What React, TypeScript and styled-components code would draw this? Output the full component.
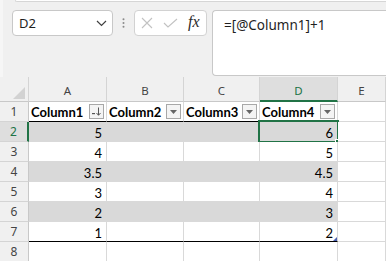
import styled, { createGlobalStyle } from 'styled-components'

const GlobalStyle = createGlobalStyle`
  html, body {
    margin: 0;
    padding: 0;
  }
  body {
    width: 386px;
    height: 261px;
    overflow: hidden;
    background: #f0f0f0;
    font-family: 'Noto Sans', 'Open Sans', sans-serif;
  }
`

const GREEN = '#217346'
const GRID = '#d9d9d9'
const BAND = '#d9d9d9'

const columns = ['A', 'B', 'C', 'D', 'E']
const colA = [5, 4, 3.5, 3, 2, 1]
const colD = [6, 5, 4.5, 4, 3, 2]

const App = () => {
  return (
    <>
      <GlobalStyle />
      <TopArea>
        <RibbonEdge />
        <FormulaRow>
          <NameBox>
            <span>D2</span>
            <svg width="11" height="7" viewBox="0 0 11 7">
              <polyline points="1,1 5.5,5.5 10,1" fill="none" stroke="#404040" strokeWidth="1.2" />
            </svg>
          </NameBox>
          <Separator>
            <svg width="3" height="10" viewBox="0 0 3 10">
              <circle cx="1.5" cy="1.2" r="1" fill="#8a8a8a" />
              <circle cx="1.5" cy="5" r="1" fill="#8a8a8a" />
              <circle cx="1.5" cy="8.8" r="1" fill="#8a8a8a" />
            </svg>
          </Separator>
          <FxGroup>
            <svg width="12" height="12" viewBox="0 0 12 12">
              <path d="M1 1 L11 11 M11 1 L1 11" stroke="#c2c2c2" strokeWidth="1.1" fill="none" />
            </svg>
            <svg width="15" height="10" viewBox="0 0 15 10">
              <polyline points="1,5 5,9 14,1" fill="none" stroke="#c2c2c2" strokeWidth="1.1" />
            </svg>
            <Fx>fx</Fx>
          </FxGroup>
          <FormulaInput>=[@Column1]+1</FormulaInput>
        </FormulaRow>
      </TopArea>

      <Sheet>
        <Corner>
          <svg width="12" height="12" viewBox="0 0 12 12">
            <polygon points="12,0 12,12 0,12" fill="#d2d2d2" />
          </svg>
        </Corner>
        {columns.map((c) => (
          <ColHead key={c} $active={c === 'D'}>
            {c}
          </ColHead>
        ))}

        <RowHead>1</RowHead>
        {['Column1', 'Column2', 'Column3', 'Column4'].map((name, i) => (
          <HeaderCell key={name}>
            <span>{name}</span>
            <FilterBtn>
              {i === 0 ? (
                <svg width="11" height="9" viewBox="0 0 11 9">
                  <rect x="1" y="6" width="3" height="1.2" fill="#555" />
                  <path d="M7.5 0.5 V8 M5.5 6 L7.5 8.3 L9.5 6" stroke="#555" strokeWidth="1" fill="none" />
                </svg>
              ) : (
                <svg width="7" height="4" viewBox="0 0 7 4">
                  <polygon points="0,0 7,0 3.5,4" fill="#666" />
                </svg>
              )}
            </FilterBtn>
          </HeaderCell>
        ))}
        <Cell />

        {colA.map((a, r) => {
          const band = r % 2 === 0
          const last = r === colA.length - 1
          return (
            <Row key={r} band={band} last={last} row={r + 2} a={a} d={colD[r]} />
          )
        })}

        <RowHead>8</RowHead>
        <Cell />
        <Cell />
        <Cell />
        <Cell />
        <Cell />
      </Sheet>
    </>
  )
}

const Row = ({ band, last, row, a, d }: { band: boolean; last: boolean; row: number; a: number; d: number }) => {
  const selected = row === 2
  return (
    <>
      <RowHead $active={selected}>{row}</RowHead>
      <Cell $band={band} $last={last}>
        {a}
      </Cell>
      <Cell $band={band} $last={last} />
      <Cell $band={band} $last={last} />
      <Cell $band={band} $last={last}>
        {d}
        {selected && (
          <Selection>
            <FillHandle />
          </Selection>
        )}
        {last && <ResizeHandle />}
      </Cell>
      <Cell />
    </>
  )
}

const TopArea = styled.div`
  height: 77px;
  box-sizing: border-box;
  border-left: 3px solid #f6f6f6;
`

const RibbonEdge = styled.div`
  height: 1px;
  margin-left: 12px;
  background: #fff;
  border-left: 1px solid #d6d6d6;
  border-bottom: 1px solid #d6d6d6;
  border-bottom-left-radius: 3px;
`

const FormulaRow = styled.div`
  display: flex;
  align-items: flex-start;
  margin-top: 8px;
  padding-left: 9px;
`

const NameBox = styled.div`
  width: 101px;
  height: 26px;
  box-sizing: border-box;
  display: flex;
  align-items: center;
  justify-content: space-between;
  padding: 0 5px 0 6px;
  background: #fff;
  border: 1px solid #c8c8c8;
  border-radius: 4px;
  font-size: 13px;
  color: #1f1f1f;
`

const Separator = styled.div`
  width: 21px;
  height: 26px;
  display: flex;
  align-items: center;
  justify-content: center;
`

const FxGroup = styled.div`
  width: 73px;
  height: 26px;
  box-sizing: border-box;
  display: flex;
  align-items: center;
  gap: 10px;
  padding-left: 6px;
  background: #fff;
  border: 1px solid #d2d2d2;
  border-radius: 4px;
`

const Fx = styled.span`
  font-family: 'Liberation Serif', serif;
  font-style: italic;
  font-size: 16px;
  color: #2b2b2b;
  margin-top: -2px;
`

const FormulaInput = styled.div`
  flex: 1;
  height: 66px;
  box-sizing: border-box;
  margin-left: 5px;
  padding: 5px 0 0 11px;
  background: #fff;
  border: 1px solid #c8c8c8;
  border-right: none;
  border-radius: 4px 0 0 4px;
  font-size: 13.5px;
  color: #1f1f1f;
`

const Sheet = styled.div`
  display: grid;
  grid-template-columns: 29px 78px 77px 76px 78px 1fr;
  grid-template-rows: 25px repeat(8, 20px);
  background: #fff;
  font-family: Lato, 'Liberation Sans', sans-serif;
  font-size: 13px;
  color: #000;
`

const Corner = styled.div`
  background: #f0f0f0;
  border-right: 1px solid #d4d4d4;
  border-bottom: 1px solid #c8c8c8;
  display: flex;
  align-items: flex-end;
  justify-content: flex-end;
  padding: 0 3px 2px 0;
`

const ColHead = styled.div<{ $active?: boolean }>`
  background: ${(p) => (p.$active ? '#dedede' : '#f0f0f0')};
  color: ${(p) => (p.$active ? GREEN : '#444')};
  border-right: 1px solid #d4d4d4;
  border-bottom: ${(p) => (p.$active ? `2px solid ${GREEN}` : '1px solid #c8c8c8')};
  display: flex;
  align-items: center;
  justify-content: center;
  padding-top: 3px;
  font-family: 'Noto Sans', sans-serif;
  font-size: 11.5px;
`

const RowHead = styled.div<{ $active?: boolean }>`
  background: ${(p) => (p.$active ? '#dedede' : '#f0f0f0')};
  color: ${(p) => (p.$active ? GREEN : '#444')};
  border-right: ${(p) => (p.$active ? `2px solid ${GREEN}` : '1px solid #c8c8c8')};
  border-bottom: 1px solid #d4d4d4;
  display: flex;
  align-items: center;
  justify-content: center;
  font-family: 'Noto Sans', sans-serif;
  font-size: 12px;
`

const Cell = styled.div<{ $band?: boolean; $last?: boolean }>`
  position: relative;
  background: ${(p) => (p.$band ? BAND : '#fff')};
  border-right: 1px solid ${(p) => (p.$band ? BAND : GRID)};
  border-bottom: 1px solid ${(p) => (p.$last ? '#000' : p.$band ? BAND : GRID)};
  display: flex;
  align-items: flex-end;
  justify-content: flex-end;
  padding-right: 4px;
  line-height: 16px;
`

const HeaderCell = styled.div`
  border-right: 1px solid ${GRID};
  border-bottom: 1px solid #000;
  display: flex;
  align-items: center;
  gap: 2px;
  padding: 0 2px 0 2px;
  font-weight: 700;
`

const FilterBtn = styled.span`
  margin-left: auto;
  width: 15px;
  height: 15px;
  box-sizing: border-box;
  display: flex;
  align-items: center;
  justify-content: center;
  background: #f4f4f4;
  border: 1px solid #a8a8a8;
`

const Selection = styled.div`
  position: absolute;
  top: -2px;
  left: -2px;
  right: -2px;
  bottom: -2px;
  border: 2px solid ${GREEN};
  pointer-events: none;
`

const FillHandle = styled.div`
  position: absolute;
  right: -4px;
  bottom: -4px;
  width: 5px;
  height: 5px;
  background: ${GREEN};
  border-left: 1px solid #fff;
  border-top: 1px solid #fff;
`

const ResizeHandle = styled.div`
  position: absolute;
  right: 0;
  bottom: 0;
  width: 0;
  height: 0;
  border-left: 4px solid transparent;
  border-bottom: 4px solid #4a5fb0;
`

export default App
